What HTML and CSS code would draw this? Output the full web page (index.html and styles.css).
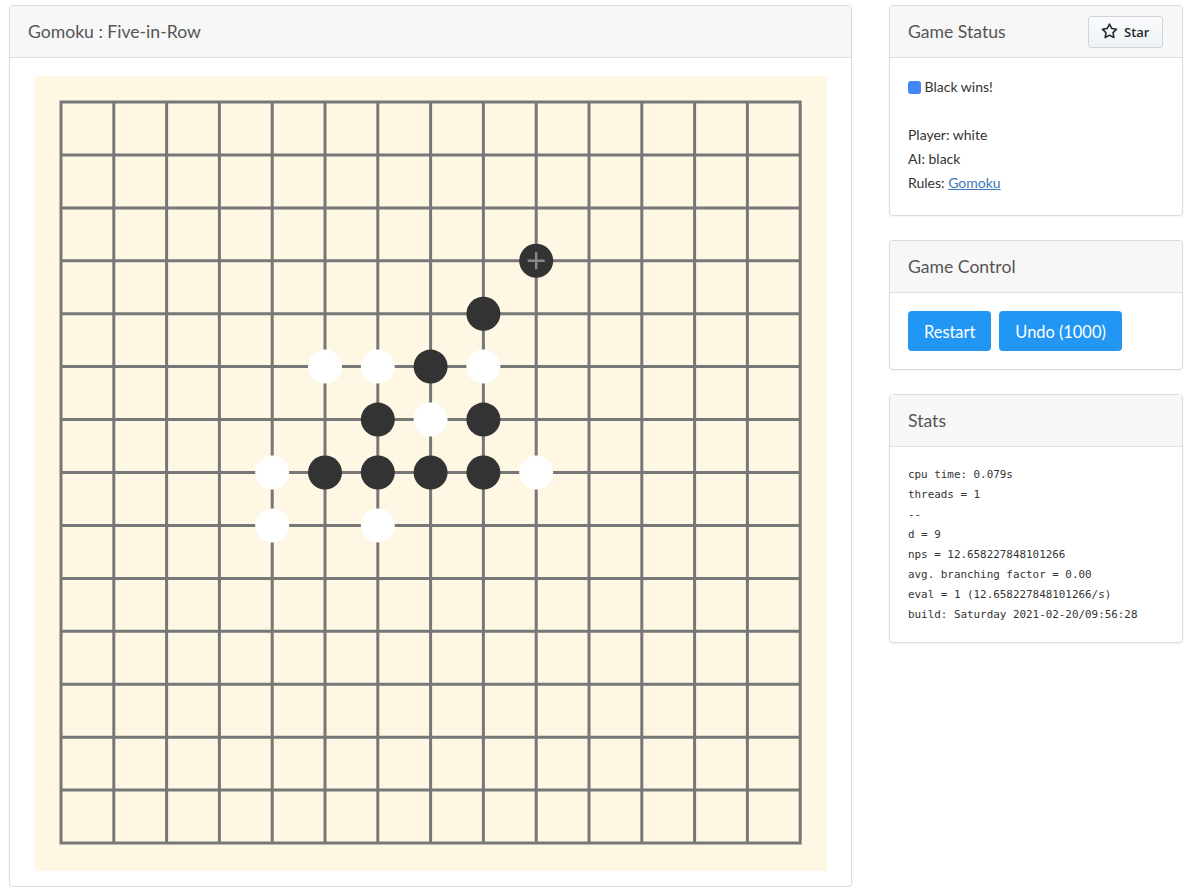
FILE: index.html
```html
<!DOCTYPE html>
<html lang="en">
<head>
<meta charset="utf-8">
<title>Gomoku : Five-in-Row</title>
<link rel="stylesheet" href="styles.css">
</head>
<body>
<div class="page">
  <section class="card board-card">
    <div class="card-header">Gomoku : Five-in-Row</div>
    <div class="card-body board-body">
      <div class="board">
        <svg class="board-svg" viewBox="0 0 792 795" width="792" height="795">
          <path class="grid" d="M26 26V767M78.8 26V767M131.6 26V767M184.4 26V767M237.2 26V767M290 26V767M342.8 26V767M395.6 26V767M448.4 26V767M501.2 26V767M554 26V767M606.8 26V767M659.6 26V767M712.4 26V767M765.2 26V767M24.5 26H766.7M24.5 78.9H766.7M24.5 131.9H766.7M24.5 184.8H766.7M24.5 237.7H766.7M24.5 290.6H766.7M24.5 343.6H766.7M24.5 396.5H766.7M24.5 449.4H766.7M24.5 502.4H766.7M24.5 555.3H766.7M24.5 608.2H766.7M24.5 661.2H766.7M24.5 714.1H766.7M24.5 767H766.7"/>
          <g class="black">
            <circle cx="501.2" cy="184.8" r="17"/>
            <circle cx="448.4" cy="237.7" r="17"/>
            <circle cx="395.6" cy="290.6" r="17"/>
            <circle cx="342.8" cy="343.6" r="17"/>
            <circle cx="448.4" cy="343.6" r="17"/>
            <circle cx="290" cy="396.5" r="17"/>
            <circle cx="342.8" cy="396.5" r="17"/>
            <circle cx="395.6" cy="396.5" r="17"/>
            <circle cx="448.4" cy="396.5" r="17"/>
          </g>
          <g class="white">
            <circle cx="290" cy="290.6" r="17"/>
            <circle cx="342.8" cy="290.6" r="17"/>
            <circle cx="448.4" cy="290.6" r="17"/>
            <circle cx="395.6" cy="343.6" r="17"/>
            <circle cx="237.2" cy="396.5" r="17"/>
            <circle cx="501.2" cy="396.5" r="17"/>
            <circle cx="237.2" cy="449.4" r="17"/>
            <circle cx="342.8" cy="449.4" r="17"/>
          </g>
          <path class="last" d="M492.7 184.8H509.7M501.2 176.3V193.3"/>
        </svg>
      </div>
    </div>
  </section>

  <aside class="side">
    <section class="card">
      <div class="card-header header-flex">
        <span>Game Status</span>
        <button class="star-btn" type="button">
          <svg class="star-icon" viewBox="0 0 16 16" width="17" height="17"><path d="M8 .25a.75.75 0 01.673.418l1.882 3.815 4.21.612a.75.75 0 01.416 1.279l-3.046 2.970.719 4.192a.75.75 0 01-1.088.791L8 12.347l-3.766 1.98a.75.75 0 01-1.088-.79l.72-4.194L.818 6.374a.75.75 0 01.416-1.28l4.21-.611L7.327.668A.75.75 0 018 .25zm0 2.445L6.615 5.5a.75.75 0 01-.564.41l-3.097.45 2.24 2.184a.75.75 0 01.216.664l-.528 3.084 2.769-1.456a.75.75 0 01.698 0l2.77 1.456-.53-3.084a.75.75 0 01.216-.664l2.24-2.183-3.096-.45a.75.75 0 01-.564-.41L8 2.694v.001z"/></svg>
          <span>Star</span>
        </button>
      </div>
      <div class="card-body status-body">
        <div class="line"><span class="dot"></span> Black wins!</div>
        <div class="line blank"></div>
        <div class="line">Player: white</div>
        <div class="line">AI: black</div>
        <div class="line">Rules: <a href="#">Gomoku</a></div>
      </div>
    </section>

    <section class="card">
      <div class="card-header">Game Control</div>
      <div class="card-body control-body">
        <button class="btn" type="button">Restart</button>
        <button class="btn" type="button">Undo (1000)</button>
      </div>
    </section>

    <section class="card">
      <div class="card-header">Stats</div>
      <div class="card-body stats-body">
<pre class="stats">cpu time: 0.079s
threads = 1
--
d = 9
nps = 12.658227848101266
avg. branching factor = 0.00
eval = 1 (12.658227848101266/s)
build: Saturday 2021-02-20/09:56:28</pre>
      </div>
    </section>
  </aside>
</div>
</body>
</html>
```

FILE: styles.css
```css
* { box-sizing: border-box; }

html, body {
  margin: 0;
  background: #fff;
}

body {
  font-family: "Lato", "Open Sans", "Noto Sans", sans-serif;
  color: #333;
  font-size: 14px;
}

.page {
  display: flex;
  align-items: flex-start;
  gap: 37px;
  padding: 5px 0 0 9px;
}

.card {
  background: #fff;
  border: 1px solid #dcdcdc;
  border-radius: 4px;
  box-shadow: 0 1px 2px rgba(0, 0, 0, 0.05);
  overflow: hidden;
}

.card-header {
  height: 52px;
  padding: 0 18px;
  display: flex;
  align-items: center;
  background: #f7f7f7;
  border-bottom: 1px solid #e0e0e0;
  color: #555;
  font-size: 17.6px;
}

.header-flex {
  justify-content: space-between;
  padding-right: 19px;
}

.board-card {
  width: 843px;
  flex: none;
}

.board-body {
  padding: 18px 24px 15px 25px;
}

.board {
  width: 792px;
  height: 795px;
  background: #fdf7e4;
}

.board-svg {
  display: block;
}

.grid {
  stroke: #777;
  stroke-width: 3;
  fill: none;
}

.black circle { fill: #333; }
.white circle { fill: #fff; }

.last {
  stroke: #8a8a8a;
  stroke-width: 2.4;
  fill: none;
}

.side {
  width: 294px;
  flex: none;
  display: flex;
  flex-direction: column;
  gap: 24px;
}

.star-btn {
  display: flex;
  align-items: center;
  gap: 6px;
  height: 32px;
  width: 75px;
  padding: 0 12px 0 12px;
  border: 1px solid #d1d5da;
  border-radius: 3px;
  background: linear-gradient(#fafbfc, #eff3f6);
  color: #24292e;
  font-family: "Open Sans", "Noto Sans", sans-serif;
  font-size: 13px;
  font-weight: 600;
}

.star-icon {
  fill: #24292e;
  flex: none;
}

.status-body {
  padding: 17px 18px 20px;
}

.line {
  height: 24px;
  line-height: 24px;
  display: flex;
  align-items: center;
  white-space: pre;
}

.dot {
  display: inline-block;
  width: 13px;
  height: 13px;
  border-radius: 3px;
  background: #4287f5;
}

.status-body a {
  color: #3a78b8;
  text-decoration: underline;
}

.control-body {
  display: flex;
  gap: 8px;
  padding: 18px 18px 18px;
}

.btn {
  height: 40px;
  padding: 0 16px;
  border: none;
  border-radius: 4px;
  background: #2196f3;
  color: #fff;
  font-family: "Lato", "Open Sans", sans-serif;
  font-size: 16.4px;
}

.stats-body {
  padding: 18px 18px 17px;
}

.stats {
  margin: 0;
  font-family: "DejaVu Sans Mono", "Liberation Mono", monospace;
  font-size: 10.9px;
  line-height: 20px;
  color: #333;
}
```
